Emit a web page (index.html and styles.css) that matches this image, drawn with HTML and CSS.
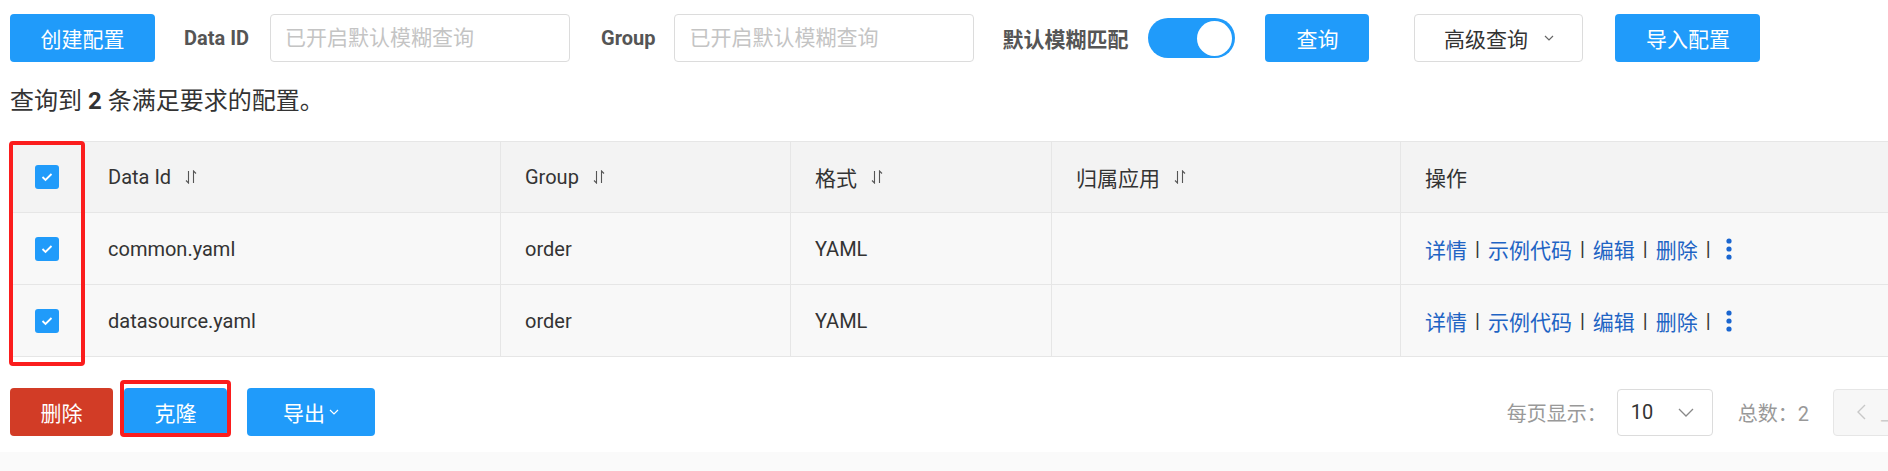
FILE: index.html
```html
<!DOCTYPE html>
<html lang="zh-CN">
<head>
<meta charset="utf-8">
<title>配置管理</title>
<link rel="stylesheet" href="styles.css">
</head>
<body>
<div class="page">
  <div class="toolbar">
    <button class="btn btn-primary btn-create">创建配置</button>
    <span class="field-label label-dataid">Data ID</span>
    <input class="input" type="text" placeholder="已开启默认模糊查询">
    <span class="field-label label-group">Group</span>
    <input class="input" type="text" placeholder="已开启默认模糊查询">
    <span class="field-label label-fuzzy">默认模糊匹配</span>
    <span class="switch"><span class="switch-knob"></span></span>
    <button class="btn btn-primary btn-query">查询</button>
    <button class="btn btn-normal btn-advanced">高级查询<svg class="caret-sm" width="10" height="6" viewBox="0 0 10 6"><path d="M1 1 L5 5 L9 1" fill="none" stroke="#666" stroke-width="1.2"/></svg></button>
    <button class="btn btn-primary btn-import">导入配置</button>
  </div>

  <div class="summary">查询到 <strong>2</strong> 条满足要求的配置。</div>

  <div class="table-wrap">
    <div class="row row-head">
      <div class="cell cell-check"><span class="checkbox"><svg width="12" height="10" viewBox="0 0 12 10"><path d="M1.5 5 L4.5 8 L10.5 2" fill="none" stroke="#fff" stroke-width="1.8"/></svg></span></div>
      <div class="cell">Data Id<svg class="sort" width="12" height="14" viewBox="0 0 12 14"><path d="M3.5 1 V13 L1 10.5" fill="none" stroke="#555" stroke-width="1.1"/><path d="M8.5 13 V1 L11 3.5" fill="none" stroke="#555" stroke-width="1.1"/></svg></div>
      <div class="cell cell-bl">Group<svg class="sort" width="12" height="14" viewBox="0 0 12 14"><path d="M3.5 1 V13 L1 10.5" fill="none" stroke="#555" stroke-width="1.1"/><path d="M8.5 13 V1 L11 3.5" fill="none" stroke="#555" stroke-width="1.1"/></svg></div>
      <div class="cell cell-bl cjk">格式<svg class="sort" width="12" height="14" viewBox="0 0 12 14"><path d="M3.5 1 V13 L1 10.5" fill="none" stroke="#555" stroke-width="1.1"/><path d="M8.5 13 V1 L11 3.5" fill="none" stroke="#555" stroke-width="1.1"/></svg></div>
      <div class="cell cell-bl cjk">归属应用<svg class="sort" width="12" height="14" viewBox="0 0 12 14"><path d="M3.5 1 V13 L1 10.5" fill="none" stroke="#555" stroke-width="1.1"/><path d="M8.5 13 V1 L11 3.5" fill="none" stroke="#555" stroke-width="1.1"/></svg></div>
      <div class="cell cell-bl cjk">操作</div>
    </div>
    <div class="row row-body">
      <div class="cell cell-check"><span class="checkbox"><svg width="12" height="10" viewBox="0 0 12 10"><path d="M1.5 5 L4.5 8 L10.5 2" fill="none" stroke="#fff" stroke-width="1.8"/></svg></span></div>
      <div class="cell">common.yaml</div>
      <div class="cell cell-bl">order</div>
      <div class="cell cell-bl">YAML</div>
      <div class="cell cell-bl"></div>
      <div class="cell cell-bl cjk"><a class="op">详情</a><span class="sep">|</span><a class="op">示例代码</a><span class="sep">|</span><a class="op">编辑</a><span class="sep">|</span><a class="op">删除</a><span class="sep">|</span><svg class="more" width="6" height="22" viewBox="0 0 6 22"><circle cx="3" cy="3" r="2.6" fill="#1a66d0"/><circle cx="3" cy="11" r="2.6" fill="#1a66d0"/><circle cx="3" cy="19" r="2.6" fill="#1a66d0"/></svg></div>
    </div>
    <div class="row row-body">
      <div class="cell cell-check"><span class="checkbox"><svg width="12" height="10" viewBox="0 0 12 10"><path d="M1.5 5 L4.5 8 L10.5 2" fill="none" stroke="#fff" stroke-width="1.8"/></svg></span></div>
      <div class="cell">datasource.yaml</div>
      <div class="cell cell-bl">order</div>
      <div class="cell cell-bl">YAML</div>
      <div class="cell cell-bl"></div>
      <div class="cell cell-bl cjk"><a class="op">详情</a><span class="sep">|</span><a class="op">示例代码</a><span class="sep">|</span><a class="op">编辑</a><span class="sep">|</span><a class="op">删除</a><span class="sep">|</span><svg class="more" width="6" height="22" viewBox="0 0 6 22"><circle cx="3" cy="3" r="2.6" fill="#1a66d0"/><circle cx="3" cy="11" r="2.6" fill="#1a66d0"/><circle cx="3" cy="19" r="2.6" fill="#1a66d0"/></svg></div>
    </div>
    <div class="annot annot-col"></div>
  </div>

  <div class="footer">
    <div class="batch">
      <button class="btn btn-danger btn-del">删除</button>
      <button class="btn btn-primary btn-clone">克隆</button>
      <button class="btn btn-primary btn-export">导出<svg class="caret-sm" width="10" height="6" viewBox="0 0 10 6"><path d="M1 1 L5 5 L9 1" fill="none" stroke="#fff" stroke-width="1.2"/></svg></button>
      <div class="annot annot-clone"></div>
    </div>
    <div class="pagination">
      <span class="pg-label">每页显示：</span>
      <span class="pg-select">10<svg width="16" height="9" viewBox="0 0 16 9"><path d="M1 1 L8 8 L15 1" fill="none" stroke="#888" stroke-width="1.3"/></svg></span>
      <span class="pg-total">总数：2</span>
      <span class="pg-prev"><svg width="10" height="16" viewBox="0 0 10 16"><path d="M9 1 L2 8 L9 15" fill="none" stroke="#c8c8c8" stroke-width="1.4"/></svg><span class="pg-prev-text">上一页</span></span>
    </div>
  </div>
</div>
<div class="bottom-strip"></div>
</body>
</html>
```

FILE: styles.css
```css
html, body {
  margin: 0;
  padding: 0;
  overflow: hidden;
  background: #fff;
}
body {
  font-family: Roboto, "Noto Sans CJK SC", sans-serif;
  font-size: 20px;
  color: #333;
}
.cjk { font-size: 21px; }
.page {
  padding: 14px 0 0 10px;
  width: 1943px;
}
.toolbar {
  display: flex;
  align-items: center;
  height: 48px;
}
.btn {
  height: 48px;
  border: none;
  border-radius: 4px;
  font-family: Roboto, "Noto Sans CJK SC", sans-serif;
  font-size: 21px;
  padding: 0;
  display: inline-flex;
  align-items: center;
  justify-content: center;
  box-sizing: border-box;
  flex: none;
}
.btn-primary { background: #209bfa; color: #fff; }
.btn-danger { background: #d23c26; color: #fff; }
.btn-normal { background: #fff; color: #333; border: 1px solid #dcdcdc; }
.btn-create { width: 145px; }
.field-label {
  font-weight: bold;
  color: #555;
  flex: none;
}
.label-dataid { margin-left: 29px; margin-right: 21px; }
.label-group { margin-left: 31px; margin-right: 19px; }
.label-fuzzy { margin-left: 28px; margin-right: 20px; font-size: 21px; }
.input {
  width: 300px;
  height: 48px;
  box-sizing: border-box;
  border: 1px solid #dcdcdc;
  border-radius: 4px;
  padding: 0 14px;
  font-family: Roboto, "Noto Sans CJK SC", sans-serif;
  font-size: 21px;
  color: #333;
  outline: none;
  flex: none;
}
.input::placeholder { color: #c4c4c4; }
.switch {
  width: 87px;
  height: 40px;
  border-radius: 20px;
  background: #209bfa;
  display: flex;
  align-items: center;
  justify-content: flex-end;
  padding-right: 3px;
  box-sizing: border-box;
  flex: none;
}
.switch-knob {
  width: 35px;
  height: 35px;
  border-radius: 50%;
  background: #fff;
}
.btn-query { width: 104px; margin-left: 30px; }
.btn-advanced { width: 169px; margin-left: 45px; }
.btn-advanced .caret-sm { margin-left: 16px; }
.btn-import { width: 145px; margin-left: 32px; }
.caret-sm { margin-left: 8px; }

.summary {
  margin-top: 23px;
  line-height: 32px;
  font-size: 24px;
  color: #333;
}
.summary strong { font-weight: bold; }

.table-wrap {
  position: relative;
  margin-top: 24px;
  width: 1920px;
}
.row {
  display: grid;
  grid-template-columns: 74px 416px 290px 261px 349px 530px;
  height: 72px;
  box-sizing: border-box;
  border-bottom: 1px solid #e6e6e6;
}
.row-head {
  background: #f3f3f3;
  border-top: 1px solid #e6e6e6;
}
.row-body { background: #f8f8f8; }
.cell {
  display: flex;
  align-items: center;
  padding-left: 24px;
  box-sizing: border-box;
  white-space: nowrap;
}
.cell-bl { border-left: 1px solid #e6e6e6; }
.cell-check {
  padding-left: 0;
  justify-content: center;
  border-right: 1px solid #e6e6e6;
}
.checkbox {
  width: 24px;
  height: 24px;
  border-radius: 3px;
  background: #209bfa;
  display: flex;
  align-items: center;
  justify-content: center;
}
.sort { margin-left: 14px; }
.op { color: #1f64c4; }
.sep { color: #333; padding: 0 8px; font-size: 20px; }
.more { margin-left: 7px; }

.annot {
  position: absolute;
  border: 4px solid #fb1d1d;
  border-radius: 4px;
  box-sizing: border-box;
  pointer-events: none;
}
.annot-col {
  left: -1px;
  top: 0;
  width: 76px;
  height: 225px;
}

.footer {
  margin-top: 31px;
  width: 1943px;
  height: 48px;
  display: flex;
  align-items: center;
  justify-content: space-between;
}
.batch {
  position: relative;
  display: flex;
  align-items: center;
}
.btn-del { width: 103px; }
.btn-clone { width: 103px; margin-left: 11px; }
.btn-export { width: 128px; margin-left: 20px; }
.btn-export .caret-sm { margin-left: 4px; }
.annot-clone {
  left: 110px;
  top: -8px;
  width: 111px;
  height: 57px;
}
.pagination {
  display: flex;
  align-items: center;
  white-space: nowrap;
}
.pg-label { color: #999; }
.pg-select {
  margin-left: 10px;
  width: 96px;
  height: 47px;
  box-sizing: border-box;
  border: 1px solid #dcdcdc;
  border-radius: 4px;
  display: flex;
  align-items: center;
  justify-content: space-between;
  padding: 0 18px 0 13px;
  color: #333;
}
.pg-total { margin-left: 25px; color: #999; }
.pg-prev {
  margin-left: 24px;
  width: 120px;
  height: 47px;
  box-sizing: border-box;
  border: 1px solid #e6e6e6;
  border-radius: 4px;
  background: #f7f7f7;
  display: flex;
  align-items: center;
  padding-left: 22px;
  color: #ccc;
  gap: 14px;
  flex: none;
}
.pg-prev-text { white-space: nowrap; }
.bottom-strip {
  margin-top: 16px;
  height: 40px;
  background: #fafafa;
}
```
